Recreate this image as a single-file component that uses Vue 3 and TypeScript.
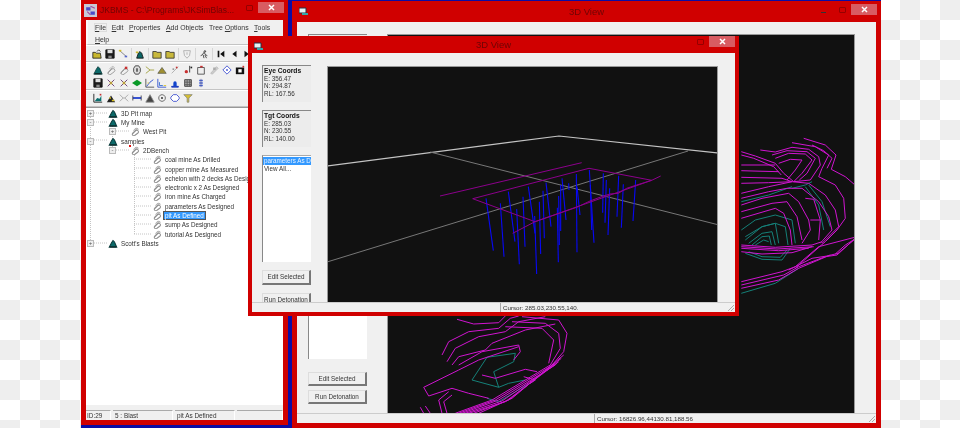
<template>
  <div class="desk">
    <!-- tree window -->
    <div class="win tree-win">
      <div class="titlebar left-title">
        <svg class="app-icon" width="13" height="13" viewBox="0 0 12 12">
          <rect width="12" height="12" fill="#c9c9d6" />
          <path d="M2 3h4v3H2zM6 7h4v3H6z" fill="#4a4ac8" />
          <path d="M6 2l4 2M3 7l3 3" stroke="#a04a9a" fill="none" />
        </svg>
        <span class="title">JKBMS - C:\Programs\JKSimBlas...</span>
        <div class="controls tree-controls">
          <span class="max"></span>
          <span class="close"><svg width="7" height="7" viewBox="0 0 7 7"><path d="M1 1l5 5M6 1l-5 5" stroke="#fff" stroke-width="1.5" /></svg></span>
        </div>
      </div>
      <div class="client">
        <div class="menu">
          <div class="menu-row">
            <span class="pressed"><u>F</u>ile</span>
            <span><u>E</u>dit</span>
            <span><u>P</u>roperties</span>
            <span><u>A</u>dd Objects</span>
            <span>Tree <u>O</u>ptions</span>
            <span><u>T</u>ools</span>
          </div>
          <div class="menu-row"><span><u>H</u>elp</span></div>
        </div>
        <div class="toolbar top-tools">
          <template v-for="(group, g) in topGroups" :key="g">
            <svg v-for="(name, i) in group" :key="i" class="tool" viewBox="0 0 12 12">
              <path v-for="(p, j) in icons[name]" :key="j" :d="p[0]" :fill="p[1]" :stroke="p[2]" />
            </svg>
            <span class="tool-sep"></span>
          </template>
        </div>
        <div class="toolbar tool-block">
          <div v-for="(row, r) in blockRows" :key="r" class="tool-row">
            <svg v-for="(name, i) in row" :key="i" class="tool" viewBox="0 0 12 12">
              <path v-for="(p, j) in icons[name]" :key="j" :d="p[0]" :fill="p[1]" :stroke="p[2]" />
            </svg>
          </div>
        </div>
        <div class="toolbar tool-block last-tools">
          <div class="tool-row">
            <svg v-for="(name, i) in lastRow" :key="i" class="tool" viewBox="0 0 12 12">
              <path v-for="(p, j) in icons[name]" :key="j" :d="p[0]" :fill="p[1]" :stroke="p[2]" />
            </svg>
          </div>
        </div>
        <div class="tree">
          <svg class="tree-lines" width="196" height="298" viewBox="87 107 196 298">
            <g stroke="#c4c4c4" stroke-dasharray="1 1" fill="none">
              <path d="M91.500 113V243M113.500 122V150M135.500 155V234" />
              <path d="M91 113h17M91 122h17M91 140h17M91 243h17M113 131h17M113 150h17" />
              <path d="M135 159h17M135 168h17M135 178h17M135 187h17M135 196h17M135 206h17M135 215h17M135 224h17M135 234h17" />
            </g>
          </svg>
          <div v-for="row in treeRows" :key="row.label" class="tree-row" :class="'depth' + row.depth">
            <span class="expander">
              <span v-if="row.exp" class="box">{{ row.exp }}</span>
            </span>
            <span class="tree-icon">
              <svg width="10" height="9" viewBox="0 0 12 12">
                <path v-for="(p, j) in icons[row.icon]" :key="j" :d="p[0]" :fill="p[1]" :stroke="p[2]" />
              </svg>
              <i v-if="row.label === '2DBench'" class="red-dot"></i>
            </span>
            <span class="tree-label" :class="{ selected: row.label === 'pit As Defined' }">{{ row.label }}</span>
          </div>
        </div>
        <div class="tree-status">
          <span class="cell c1">ID:29</span>
          <span class="cell c2">5 : Blast</span>
          <span class="cell c3">pit As Defined</span>
          <span class="cell c4"></span>
        </div>
      </div>
    </div>

    <!-- back 3D view -->
    <div class="win back-view">
      <div class="titlebar view-title">
        <svg class="view-icon" width="9" height="8" viewBox="0 0 9 8"><path d="M0 1h7v5H0z" fill="#e8f4f4" stroke="#234" /><path d="M3 6h6v2H3z" fill="#3aa" /></svg>
        <span class="title">3D View</span>
        <div class="controls back-controls">
          <span class="min"></span>
          <span class="max"></span>
          <span class="close"><svg width="7" height="7" viewBox="0 0 7 7"><path d="M1 1l5 5M6 1l-5 5" stroke="#fff" stroke-width="1.5" /></svg></span>
        </div>
      </div>
      <div class="client">
        <div class="view-body back-body">
          <div class="side back-side">
            <div class="group back-group"></div>
            <div class="list back-list"></div>
            <div class="btn back-btn">Edit Selected</div>
            <div class="btn back-btn run">Run Detonation</div>
          </div>
          <div class="plot">
            <svg width="469" height="378" viewBox="386 35 469 378" fill="none" stroke-linejoin="round">
              <polyline v-for="(p, i) in tealLines" :key="'t' + i" :points="p" stroke="#158078" />
              <polyline v-for="(p, i) in pitLines" :key="'m' + i" :points="p" stroke="#d014d0" />
            </svg>
          </div>
        </div>
        <div class="view-status back-status">
          <span class="cursor">Cursor: 16826.96,44130.81,188.56</span>
          <svg class="grip" width="9" height="9" viewBox="0 0 9 9"><path d="M8 2L2 8M8 5L5 8" stroke="#aaa" /></svg>
        </div>
      </div>
    </div>

    <!-- front 3D view -->
    <div class="win front-view">
      <div class="titlebar view-title front-title">
        <svg class="view-icon" width="9" height="8" viewBox="0 0 9 8"><path d="M0 1h7v5H0z" fill="#e8f4f4" stroke="#234" /><path d="M3 6h6v2H3z" fill="#3aa" /></svg>
        <span class="title">3D View</span>
        <div class="controls front-controls">
          <span class="max"></span>
          <span class="close"><svg width="7" height="7" viewBox="0 0 7 7"><path d="M1 1l5 5M6 1l-5 5" stroke="#fff" stroke-width="1.5" /></svg></span>
        </div>
      </div>
      <div class="client">
        <div class="view-body front-body">
          <div class="side front-side">
            <div class="group">
              <b>Eye Coords</b>
              <span>E: 356.47</span>
              <span>N: 294.87</span>
              <span>RL: 167.56</span>
            </div>
            <div class="group">
              <b>Tgt Coords</b>
              <span>E: 285.03</span>
              <span>N: 230.55</span>
              <span>RL: 140.00</span>
            </div>
            <div class="list front-list">
              <span class="list-sel">parameters As D</span>
              <span class="list-item">View All...</span>
            </div>
            <div class="btn front-btn">Edit Selected</div>
            <div class="btn front-btn run">Run Detonation</div>
          </div>
          <div class="plot front-plot">
            <svg width="390" height="234" viewBox="328 67 390 234" fill="none">
              <polyline points="327,166 559,136 719,153" stroke="#c4c4c4" stroke-width="1.200" />
              <polyline points="327,262 688,151" stroke="#777" />
              <polyline points="430,152 719,225" stroke="#777" />
              <line v-for="(d, i) in drills" :key="i" :x1="d[0]" :y1="d[1]" :x2="d[2]" :y2="d[3]" stroke="#0808f4" stroke-width="1.100" />
              <polyline v-for="(p, i) in purpleLines" :key="'p' + i" :points="p" stroke="#8c008c" />
            </svg>
          </div>
        </div>
        <div class="view-status front-status">
          <span class="cursor">Cursor: 285.03,230.55,140.</span>
          <svg class="grip" width="9" height="9" viewBox="0 0 9 9"><path d="M8 2L2 8M8 5L5 8" stroke="#aaa" /></svg>
        </div>
      </div>
    </div>
  </div>
</template>

<script setup lang="ts">
type Part = [string, string, string]

const mine: Part[] = [['M1 11L4 5L6 2L8 4L11 11Z', '#0c6a6a', '#0b3b3b'], ['M2 10h8v1H2z', '#111', 'none']]
const clip: Part[] = [['M2 10L7 5A2 2 0 0 1 10 8L6 11A1.500 1.500 0 0 1 3 8L8 3', 'none', '#8f8f8f'], ['M4 5L7 2A2 2 0 0 1 10 4', 'none', '#b0b0b0']]
const cross: Part[] = [['M2 2L10 10M10 2L2 10', 'none', '#5a2a66'], ['M4 6h4M6 4v4', 'none', '#d8c020']]

const icons: Record<string, Part[]> = {
  open: [['M1 4h3l1 1h5l1 6H1z', '#c8b62c', '#222'], ['M6 3l2-2 2 2', 'none', '#222']],
  save: [['M1 1h10v10H1z', '#1c1c1c', '#111'], ['M3 1h6v4H3z', '#ddd', 'none'], ['M4 8h4v3H4z', '#888', 'none']],
  wand: [['M2 2L10 9', 'none', '#777'], ['M1 1h3v2H1z', '#d8c020', 'none'], ['M8 8h3v2H8z', '#5566cc', 'none']],
  mine,
  hut: [['M2 11L4 5L6 3L8 5L10 11Z', '#0c6666', '#111'], ['M1 3h3v2H1z', '#c8b62c', 'none']],
  folder: [['M1 3h4l1 1h5v7H1z', '#c8b83c', '#333']],
  shield: [['M2 2h8l-1 6-3 3-3-3z', 'none', '#aaa'], ['M5 4h2v3H5z', '#ccc', 'none']],
  runner: [['M7 2a1 1 0 1 0 .1 0M6 4L4 7L2 8M6 4L8 7L10 8M5 7L6 11M7 7L9 11', 'none', '#333']],
  first: [['M2 2h2v8H2zM10 2v8L5 6z', '#111', 'none']],
  prev: [['M9 2v8L4 6z', '#111', 'none']],
  next: [['M3 2v8L8 6z', '#111', 'none']],
  clip,
  clipRed: [['M2 10L7 5A2 2 0 0 1 10 8L6 11A1.500 1.500 0 0 1 3 8L8 3', 'none', '#8f8f8f'], ['M7 2h3v3H7z', '#c83030', 'none']],
  hex: [['M4 1h4l2 3v4l-2 3H4L2 8V4z', '#ddd', '#333'], ['M5 4h2v4H5z', '#555', 'none']],
  branch: [['M1 2L6 6L1 10M6 6H11', 'none', '#9a9a30']],
  hill: [['M1 10L6 3L11 10Z', '#a09030', '#665']],
  dash: [['M2 10L10 2', 'none', '#aaa'], ['M7 2h2v2H7z', '#c83030', 'none'], ['M3 4h2v2H3z', '#999', 'none']],
  bar: [['M8 1v8', 'none', '#222'], ['M2 8a2 2 0 1 0 4 0a2 2 0 1 0 -4 0', '#c83030', 'none'], ['M9 2h2v2H9z', '#222', 'none']],
  box: [['M2 3h8v8H2z', '#eee', '#444'], ['M5 1h3v2H5z', '#c83030', 'none']],
  smear: [['M2 10L9 2L11 4L4 11Z', '#ccc', '#bbb'], ['M5 3h3v3H5z', '#aaa', 'none']],
  ring: [['M6 1L11 6L6 11L1 6Z', '#fff', '#3344cc'], ['M5 5h2v2H5z', '#3344cc', 'none']],
  camera: [['M1 3h10v8H1z', '#111', 'none'], ['M4 5h4v4H4z', '#fff', 'none'], ['M9 1h2v2H9z', '#c83030', 'none']],
  cross,
  diamond: [['M6 2L12 6L6 10L0 6Z', '#0a9a28', 'none']],
  chart: [['M1 1V11H11', 'none', '#444'], ['M2 10L6 5L10 2', 'none', '#2244cc'], ['M3 6h2', 'none', '#d8c020']],
  chart2: [['M1 1V11H11', 'none', '#2244cc'], ['M3 5V9H7', 'none', '#2a66cc'], ['M8 9h3', 'none', '#d8c020']],
  hat: [['M2 10h8v1H2z', '#1133bb', '#1133bb'], ['M4 6a2 2 0 0 1 4 0v4H4z', '#1144cc', 'none']],
  grid: [['M2 2h8v8H2z', '#aaa', '#333'], ['M2 5h8M2 8h8M5 2v8M8 2v8', 'none', '#555']],
  stack: [['M4 2h4v2H4zM4 5h4v2H4zM4 8h4v2H4z', '#2244cc', 'none'], ['M6 1v10', 'none', '#88a']],
  area: [['M1 1V11H11', 'none', '#111'], ['M2 10L5 6L8 7L10 3V10Z', '#0c7070', 'none'], ['M8 1h2v2H8z', '#c83030', 'none']],
  peak: [['M1 11L6 3L11 11Z', '#222', 'none'], ['M4 5h2v2H4zM7 8h3v2H7z', '#d8c020', 'none']],
  xGray: [['M1 2L5 6L1 10M11 2L7 6L11 10M5 6h2', 'none', '#a0a0a0']],
  beam: [['M1 5h10v2H1z', '#1133cc', 'none'], ['M1 3v6M11 3v6', 'none', '#334']],
  tri: [['M6 2L11 11H1Z', '#444', '#888']],
  target: [['M6 2a4 4 0 1 0 .1 0', 'none', '#555'], ['M5 5h2v2H5z', '#111', 'none']],
  octa: [['M4 2h4l3 3v2L8 10H4L1 7V5z', '#fff', '#3344cc']],
  funnel: [['M1 2h10L7 6v5H5V6z', '#d8c030', '#887']]
}

const topGroups = [
  ['open', 'save', 'wand'],
  ['hut'],
  ['folder', 'folder'],
  ['shield'],
  ['runner'],
  ['first', 'prev', 'next']
]

const blockRows = [
  ['mine', 'clip', 'clipRed', 'hex', 'branch', 'hill', 'dash', 'bar', 'box', 'smear', 'ring', 'camera'],
  ['save', 'cross', 'cross', 'diamond', 'chart', 'chart2', 'hat', 'grid', 'stack']
]
const lastRow = ['area', 'peak', 'xGray', 'beam', 'tri', 'target', 'octa', 'funnel']

const treeRows = [
  { label: '3D Pit map', depth: 0, exp: '+', icon: 'mine' },
  { label: 'My Mine', depth: 0, exp: '-', icon: 'mine' },
  { label: 'West Pit', depth: 1, exp: '+', icon: 'clip' },
  { label: 'samples', depth: 0, exp: '-', icon: 'mine' },
  { label: '2DBench', depth: 1, exp: '-', icon: 'clip' },
  { label: 'coal mine As Drilled', depth: 2, exp: '', icon: 'clip' },
  { label: 'copper mine As Measured', depth: 2, exp: '', icon: 'clip' },
  { label: 'echelon with 2 decks As Designed', depth: 2, exp: '', icon: 'clip' },
  { label: 'electronic x 2 As Designed', depth: 2, exp: '', icon: 'clip' },
  { label: 'iron mine As Charged', depth: 2, exp: '', icon: 'clip' },
  { label: 'parameters As Designed', depth: 2, exp: '', icon: 'clip' },
  { label: 'pit As Defined', depth: 2, exp: '', icon: 'clip' },
  { label: 'sump As Designed', depth: 2, exp: '', icon: 'clip' },
  { label: 'tutorial As Designed', depth: 2, exp: '', icon: 'clip' },
  { label: "Scott's Blasts", depth: 0, exp: '+', icon: 'mine' }
]

// traced from 3x crops of the screenshot, so points get mapped back to page coords
function mapPts(ox: number, oy: number, pts: string) {
  return pts
    .split(' ')
    .map((p) => {
      const [x, y] = p.split(',').map(Number)
      return (ox + x / 3).toFixed(1) + ',' + (oy + y / 3).toFixed(1)
    })
    .join(' ')
}

const purpleLines = [
  '0,228 425,128',
  '98,236 447,145 635,181 285,305 98,236',
  '218,340 285,305 410,262 450,243 490,228 510,222 535,220 560,205 590,195 635,181 662,168'
].map((s) => mapPts(440, 120, s))

const drills = [
  [138, 235, 160, 392], [181, 250, 192, 410], [205, 215, 225, 365], [230, 267, 238, 433],
  [249, 230, 255, 380], [265, 200, 285, 340], [284, 288, 290, 462], [298, 245, 302, 402],
  [309, 212, 313, 355], [318, 188, 333, 320], [352, 263, 355, 427], [356, 228, 358, 375],
  [362, 195, 362, 333], [366, 175, 378, 300], [386, 190, 387, 210], [409, 162, 411, 397],
  [411, 200, 420, 285], [448, 150, 462, 368], [451, 195, 455, 330], [490, 160, 488, 278],
  [499, 180, 495, 308], [509, 205, 504, 345], [536, 167, 531, 290], [550, 193, 544, 323],
  [587, 180, 579, 303]
].map((d) => [440 + d[0] / 3, 120 + d[1] / 3, 440 + d[2] / 3, 120 + d[3] / 3])

const pitLines = [
  ...[
    '275,25 340,45 372,75 358,118 400,140 435,170',
    '240,38 310,50 350,75 330,115 320,140 370,165 395,205 400,265 375,300 340,335 300,370 250,415',
    '300,45 335,62 360,85 345,115',
    '145,60 190,66 240,52 290,58 320,80 325,105 295,150 245,155',
    '190,85 230,70 280,72 300,90 270,130 245,155',
    '180,75 225,62 285,65 310,85 285,130 262,150',
    '200,100 235,88 270,90 250,120 225,150',
    '88,65 130,78 190,100 215,130 245,155',
    '88,75 125,85 185,110 208,135',
    '88,105 190,105',
    '88,122 200,125',
    '88,142 210,145 240,155',
    '88,160 170,158 240,155',
    '88,190 170,170 240,155 290,160 340,195 370,240 380,290 330,340',
    '88,205 170,185 225,175 270,175 320,215 350,260 360,300 325,340',
    '88,225 150,205 230,190 260,215 290,270 295,300 270,340',
    '88,245 180,220 225,215 255,260 270,330',
    '88,265 190,235 215,250 235,300 240,345',
    '280,205 305,208 325,270 320,330',
    '295,270 325,270',
    '88,345 190,352 300,345 330,335',
    '88,350 195,357 305,350',
    '88,355 200,362 290,355',
    '88,365 150,372 240,368 300,350',
    '88,455 210,425 250,410 320,350 435,320',
    '88,465 215,435 260,410 340,380 375,375 435,320',
    '88,475 200,450 260,415 355,375',
    '230,420 300,385 345,378 378,370 435,322',
    '370,372 400,345 432,325'
  ].map((s) => mapPts(710, 130, s)),
  ...[
    '495,58 545,72 620,68 640,48',
    '450,165 470,125 530,95 620,85 655,55 680,48',
    '465,185 490,145 560,110 640,95 680,65 760,50',
    '480,195 500,170 580,150 600,130 700,90 790,72',
    '500,195 570,155 680,135 685,155 665,180',
    '395,262 500,210 560,180 680,140',
    '395,262 410,288 480,265 530,280 590,295',
    '690,50 800,60 825,100 815,155 780,195',
    '660,65 760,70 800,100 805,145 775,195',
    '640,80 750,85 785,120 770,190',
    '490,340 600,300 775,195',
    '500,340 610,300 782,195',
    '510,340 620,300 790,195',
    '520,340 630,303 795,190',
    '530,340 640,305 800,185',
    '545,340 650,300 808,175',
    '560,340 660,295 815,165',
    '450,340 440,300 470,275',
    '465,340 455,305 480,285',
    '385,322 395,340',
    '400,318 415,340',
    '570,225 610,235 700,208 735,215',
    '695,230 730,240 715,250'
  ].map((s) => mapPts(290, 300, s))
]

const tealLines = [
  ...[
    '88,300 130,270 190,255 240,270 250,340',
    '100,320 150,290 190,280 220,290 228,345',
    '100,330 150,290 190,280 200,340',
    '110,340 150,310 180,305 190,345',
    '120,345 150,320 172,318 178,345',
    '130,345 155,330 170,335',
    '100,370 150,388 210,390 235,355',
    '110,365 150,380 205,382 225,360',
    '290,165 330,215 355,290',
    '280,170 320,225 335,300',
    '240,175 280,165 300,155',
    '88,490 190,460 260,415',
    '88,215 170,195 240,170'
  ].map((s) => mapPts(710, 130, s)),
  ...[
    '540,240 585,172 670,160 665,185 605,215 620,262 540,240',
    '620,262 650,250 700,240',
    '585,295 620,305 730,240'
  ].map((s) => mapPts(290, 300, s))
]
</script>

<style scoped>
.desk {
  position: relative;
  width: 960px;
  height: 428px;
  overflow: hidden;
  filter: blur(0.25px);
  font-family: "Liberation Sans", Arial, sans-serif;
  color: #222;
  background: conic-gradient(#eee 25%, #fff 0 50%, #eee 0 75%, #fff 0) 0 0 / 40px 40px;
}
.win {
  position: absolute;
  box-sizing: border-box;
  display: flex;
  flex-direction: column;
  background: #d00000;
}
.tree-win {
  left: 81px;
  top: 0;
  width: 210px;
  height: 428px;
  padding: 0 5px 5px 5px;
  border-right: 3px solid #0c0ca4;
  border-bottom: 3px solid #0c0ca4;
}
.back-view {
  left: 291px;
  top: 0;
  width: 590px;
  height: 428px;
  padding: 0 5px 5px 5px;
  border-top: 1px solid #0c0ca4;
  border-left: 1px solid #0c0ca4;
}
.front-view {
  left: 248px;
  top: 36px;
  width: 491px;
  height: 280px;
  padding: 0 4px 4px 4px;
}
.titlebar {
  position: relative;
  flex: none;
  display: flex;
  align-items: center;
  color: #6e0404;
  font-size: 9.500px;
}
.left-title {
  height: 20px;
}
.view-title {
  height: 21px;
  justify-content: center;
}
.front-title {
  height: 17px;
}
.left-title .title {
  margin-left: 3px;
  font-size: 8.500px;
}
.app-icon {
  margin-left: -2px;
}
.view-icon {
  position: absolute;
  left: 2px;
  top: 6px;
}
.controls {
  position: absolute;
  top: 0;
  display: flex;
  align-items: center;
}
.tree-controls {
  right: -1px;
  top: 2px;
}
.back-controls {
  right: -1px;
  top: 3px;
}
.front-controls {
  right: 0;
  top: 0;
}
.min {
  width: 5px;
  height: 1px;
  margin: 6px 13px 0 0;
  background: #333;
}
.max {
  width: 5px;
  height: 4px;
  margin-right: 5px;
  border: 1px solid #950000;
  border-radius: 1px;
}
.close {
  width: 26px;
  height: 11px;
  display: flex;
  align-items: center;
  justify-content: center;
  background: #d85c62;
}
.client {
  flex: 1;
  min-height: 0;
  display: flex;
  flex-direction: column;
  background: #f0f0f0;
}

.menu {
  flex: none;
  height: 25px;
  box-sizing: border-box;
  padding: 1px 0 0 7px;
  border-left: 2px solid #f9f9f9;
  border-bottom: 1px solid #c4c4c4;
  font-size: 6.900px;
  color: #333;
}
.menu-row {
  display: flex;
  height: 12.500px;
  align-items: center;
  gap: 5.500px;
}
.pressed {
  box-shadow: 0 0 0 1px #dcdcdc;
}
.toolbar {
  flex: none;
  display: flex;
  align-items: center;
  border-bottom: 1px solid #c4c4c4;
  border-top: 1px solid #fff;
  overflow: hidden;
}
.top-tools {
  height: 15px;
  padding-left: 5px;
  gap: 1px;
}
.tool-block {
  flex-direction: column;
  align-items: flex-start;
  padding-left: 6px;
}
.tool-row {
  display: flex;
  gap: 0.900px;
  height: 13px;
  align-items: center;
}
.last-tools {
  height: 15px;
  justify-content: flex-start;
}
.tool {
  flex: none;
  box-sizing: border-box;
  width: 12px;
  height: 12px;
  padding: 1px;
}
.tool-sep {
  flex: none;
  width: 1px;
  height: 12px;
  margin: 0 1px;
  background: #d6d6d6;
}

.tree {
  position: relative;
  flex: none;
  height: 298px;
  box-sizing: border-box;
  padding-top: 0.600px;
  background: #fff;
  border-top: 1px solid #999;
  font-size: 6.300px;
  color: #333;
}
.tree-lines {
  position: absolute;
  left: 0;
  top: -1px;
}
.tree-row {
  position: relative;
  display: flex;
  align-items: center;
  height: 9.300px;
  white-space: nowrap;
}
.depth1 {
  padding-left: 22px;
}
.depth2 {
  padding-left: 44px;
}
.expander {
  flex: none;
  width: 22px;
  display: flex;
  padding-left: 2px;
  box-sizing: border-box;
}
.box {
  width: 5px;
  height: 5px;
  line-height: 4px;
  text-align: center;
  font-size: 6px;
  color: #555;
  background: #eee;
  border: 1px solid #bbb;
  box-sizing: content-box;
  margin-left: -1px;
}
.tree-icon {
  position: relative;
  flex: none;
  width: 10px;
  margin-right: 2px;
  display: flex;
}
.tree-icon path {
  stroke-width: 1.400;
}
.red-dot {
  position: absolute;
  left: -1px;
  top: -1px;
  width: 2px;
  height: 2px;
  background: #e01010;
}
.tree-label {
  padding: 0 1px;
}
.tree-label.selected {
  color: #fff;
  background: #3399ff;
  box-shadow: 0 0 0 1px #555;
}
.tree-status {
  flex: 1;
  display: flex;
  gap: 2px;
  padding-top: 5px;
  font-size: 6.400px;
  color: #333;
}
.cell {
  box-sizing: border-box;
  height: 10px;
  padding-left: 2px;
  line-height: 10px;
  border-top: 1px solid #aaa;
  border-right: 1px solid #fff;
}
.c1 { width: 25px; padding-left: 1px; }
.c2 { width: 60px; }
.c3 { width: 60px; }
.c4 { flex: 1; }

.view-body {
  flex: 1;
  min-height: 0;
  display: flex;
  overflow: hidden;
}
.front-body {
  padding: 12px 17px 0 10px;
  gap: 16px;
}
.back-body {
  padding: 12px 21px 0 11px;
  gap: 20px;
}
.front-plot {
  margin-top: 1px;
}
.side {
  flex: none;
  display: flex;
  flex-direction: column;
  font-size: 6.300px;
  color: #333;
}
.front-side {
  width: 49px;
}
.back-side {
  width: 59px;
}
.group {
  flex: none;
  box-sizing: border-box;
  height: 37px;
  margin-bottom: 8px;
  padding: 1px 0 0 1px;
  display: flex;
  flex-direction: column;
  line-height: 7.500px;
  background: #ececec;
  border-top: 1px solid #888;
  border-left: 1px solid #888;
}
.group b {
  font-size: 6.700px;
  color: #111;
}
.back-group {
  height: 45px;
  margin-bottom: 10px;
}
.list {
  flex: none;
  box-sizing: border-box;
  display: flex;
  flex-direction: column;
  background: #fff;
  border-top: 1px solid #aaa;
  border-left: 1px solid #888;
}
.front-list {
  height: 107px;
  padding-top: 1px;
  line-height: 8px;
  white-space: nowrap;
  overflow: hidden;
}
.back-list {
  height: 270px;
}
.list-sel {
  padding-left: 1px;
  color: #e8f2ff;
  background: #3399ff;
}
.list-item {
  padding: 0 0 0 1px;
}
.btn {
  flex: none;
  box-sizing: border-box;
  text-align: center;
  white-space: nowrap;
  background: #f0f0f0;
  border-top: 1px solid #ddd;
  border-left: 1px solid #ddd;
  border-right: 2px solid #777;
  border-bottom: 2px solid #777;
}
.front-btn {
  height: 15px;
  line-height: 12px;
  margin-top: 8px;
}
.back-btn {
  height: 14px;
  line-height: 11px;
  margin-top: 13px;
}
.back-btn.run {
  margin-top: 4px;
}
.plot {
  flex: 1;
  min-width: 0;
  overflow: hidden;
  box-sizing: border-box;
  background: #111;
  border-top: 1px solid #999;
  border-left: 1px solid #999;
  border-right: 1px solid #999;
}
.plot svg {
  display: block;
}
.view-status {
  position: relative;
  flex: none;
  height: 10px;
  display: flex;
  font-size: 6.200px;
  line-height: 10px;
  color: #333;
  border-top: 1px solid #ccc;
  box-sizing: border-box;
}
.cursor {
  border-left: 1px solid #aaa;
  padding-left: 2px;
}
.front-status {
  padding-left: 248px;
}
.back-status {
  padding-left: 297px;
}
.grip {
  position: absolute;
  right: 0;
  bottom: 0;
}
</style>

<style>
html,
body {
  margin: 0;
}
</style>
